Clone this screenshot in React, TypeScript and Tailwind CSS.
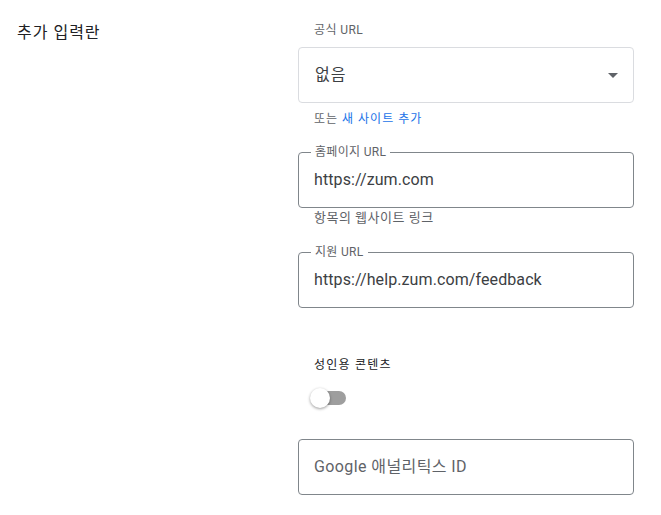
import React from "react";

const font = { fontFamily: 'Roboto, "Noto Sans CJK KR", "Noto Sans", sans-serif' };

function Outlined({ label, value }: { label?: string; value: string }) {
  return (
    <div className="relative h-[56px] rounded-[4px] border border-[#80868b] flex items-center px-[15px]">
      {label && (
        <span className="absolute -top-[9px] left-[12px] bg-white px-[4px] text-[12px] leading-[16px] tracking-[0.3px] text-[#5f6368]">
          {label}
        </span>
      )}
      <span className="text-[16px] leading-[24px] tracking-[0.1px] text-[#3c4043]">{value}</span>
    </div>
  );
}

export default function App() {
  return (
    <div className="w-[661px] h-[515px] bg-white flex" style={font}>
      <div className="w-[298px] shrink-0 pl-[17px] pt-[21px]">
        <div className="text-[16px] leading-[24px] tracking-[1px] text-[#202124]">추가 입력란</div>
      </div>
      <div className="w-[336px] shrink-0 pt-[22px]">
        <div className="pl-[16px] text-[12px] leading-[16px] tracking-[0.4px] text-[#5f6368]">공식 URL</div>
        <div className="mt-[9px] h-[56px] rounded-[4px] border border-[#dadce0] flex items-center justify-between pl-[16px] pr-[15px]">
          <span className="text-[16px] leading-[24px] tracking-[1px] text-[#3c4043]">없음</span>
          <span className="w-0 h-0 border-l-[5px] border-r-[5px] border-t-[5px] border-l-transparent border-r-transparent border-t-[#5f6368]" />
        </div>
        <div className="mt-[8px] pl-[16px] text-[12px] leading-[16px] tracking-[1px] text-[#5f6368]">
          또는 <span className="text-[#1a73e8]">새 사이트 추가</span>
        </div>
        <div className="mt-[25px]">
          <Outlined label="홈페이지 URL" value="https://zum.com" />
        </div>
        <div className="mt-[2px] pl-[16px] text-[13px] leading-[16px] tracking-[0.5px] text-[#5f6368]">항목의 웹사이트 링크</div>
        <div className="mt-[26px]">
          <Outlined label="지원 URL" value="https://help.zum.com/feedback" />
        </div>
        <div className="mt-[49px] pl-[16px] text-[12px] leading-[16px] tracking-[1.2px] text-[#202124]">성인용 콘텐츠</div>
        <div className="mt-[15px] ml-[12px] relative w-[36px] h-[20px] flex items-center">
          <div className="ml-[2px] w-[34px] h-[14px] rounded-full bg-[#9e9e9e]" />
          <div className="absolute left-0 top-0 w-[20px] h-[20px] rounded-full bg-white shadow-[0_1px_3px_rgba(0,0,0,0.4)]" />
        </div>
        <div className="mt-[31px] h-[56px] rounded-[4px] border border-[#80868b] flex items-center px-[15px]">
          <span className="text-[16px] leading-[24px] tracking-[0.4px] text-[#5f6368]">Google 애널리틱스 ID</span>
        </div>
      </div>
    </div>
  );
}
